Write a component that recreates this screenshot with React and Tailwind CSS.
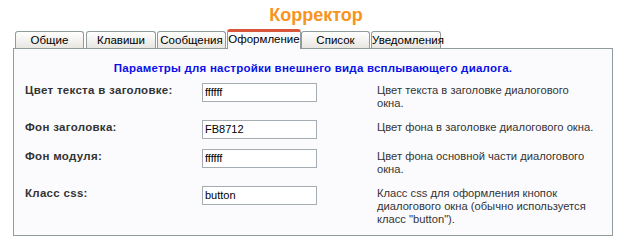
import React from "react";

const tabs = [
  { label: "Общие", w: "w-[69px]", ml: "ml-0" },
  { label: "Клавиши", w: "w-[70px]", ml: "ml-[2px]" },
  { label: "Сообщения", w: "w-[69px]", ml: "ml-[1px]" },
  { label: "Оформление", w: "w-[74px]", ml: "ml-[1px]", active: true },
  { label: "Список", w: "w-[69px]", ml: "ml-0" },
  { label: "Уведомления", w: "w-[70px]", ml: "ml-[1px]" },
];

const rows = [
  {
    label: "Цвет текста в заголовке:",
    value: "ffffff",
    desc: "Цвет текста в заголовке диалогового окна.",
  },
  {
    label: "Фон заголовка:",
    value: "FB8712",
    desc: "Цвет фона в заголовке диалогового окна.",
  },
  {
    label: "Фон модуля:",
    value: "ffffff",
    desc: "Цвет фона основной части диалогового окна.",
  },
  {
    label: "Класс css:",
    value: "button",
    desc: 'Класс css для оформления кнопок диалогового окна (обычно используется класс "button").',
  },
];

export default function App() {
  return (
    <div
      className="w-[628px] h-[244px] bg-white overflow-hidden"
      style={{ fontFamily: '"Liberation Sans", Arial, sans-serif' }}
    >
      <div className="pt-[4px] h-[26px] pl-[4px] text-center font-bold text-[18px] leading-[22px] text-[#f7941d]">
        Корректор
      </div>
      <div className="flex items-end ml-[15px] mt-[3px] h-[19px]">
        {tabs.map((t) =>
          t.active ? (
            <div
              key={t.label}
              className={`${t.w} ${t.ml} relative z-10 h-[20px] -mb-[1px] rounded-t-[3px] border-t-[3px] border-x border-t-[#d8573a] border-x-[#919b9c] bg-[#fbfbfe] text-[11.5px] leading-[14px] text-black text-center`}
            >
              {t.label}
            </div>
          ) : (
            <div
              key={t.label}
              className={`${t.w} ${t.ml} h-[17px] rounded-t-[3px] border border-b-0 border-[#919b9c] bg-gradient-to-b from-white to-[#e7e6e1] text-[11.5px] leading-[16px] text-black text-center`}
            >
              {t.label}
            </div>
          )
        )}
      </div>
      <div className="ml-[13px] w-[600px] h-[188px] border border-[#919b9c] bg-[#fbfbfe]">
        <div className="pt-[12px] h-[26px] text-center font-bold text-[11.5px] tracking-[0.22px] leading-[14px] text-[#0a10e8]">
          Параметры для настройки внешнего вида всплывающего диалога.
        </div>
        <div className="mt-[3px]">
          {rows.map((r) => (
            <div key={r.label} className="flex items-start py-[5px]">
              <div className="w-[188px] pl-[11px] pt-[1px] text-[11.5px] tracking-[0.3px] leading-[13px] font-bold text-[#333]">
                {r.label}
              </div>
              <div className="w-[115px] h-[19px] border border-[#a5acb2] bg-white pl-[2px] text-[11px] leading-[17px] text-black">
                {r.value}
              </div>
              <div className="ml-[60px] w-[218px] pt-[1px] text-[11.2px] leading-[13px] text-[#333]">
                {r.desc}
              </div>
            </div>
          ))}
        </div>
      </div>
    </div>
  );
}
